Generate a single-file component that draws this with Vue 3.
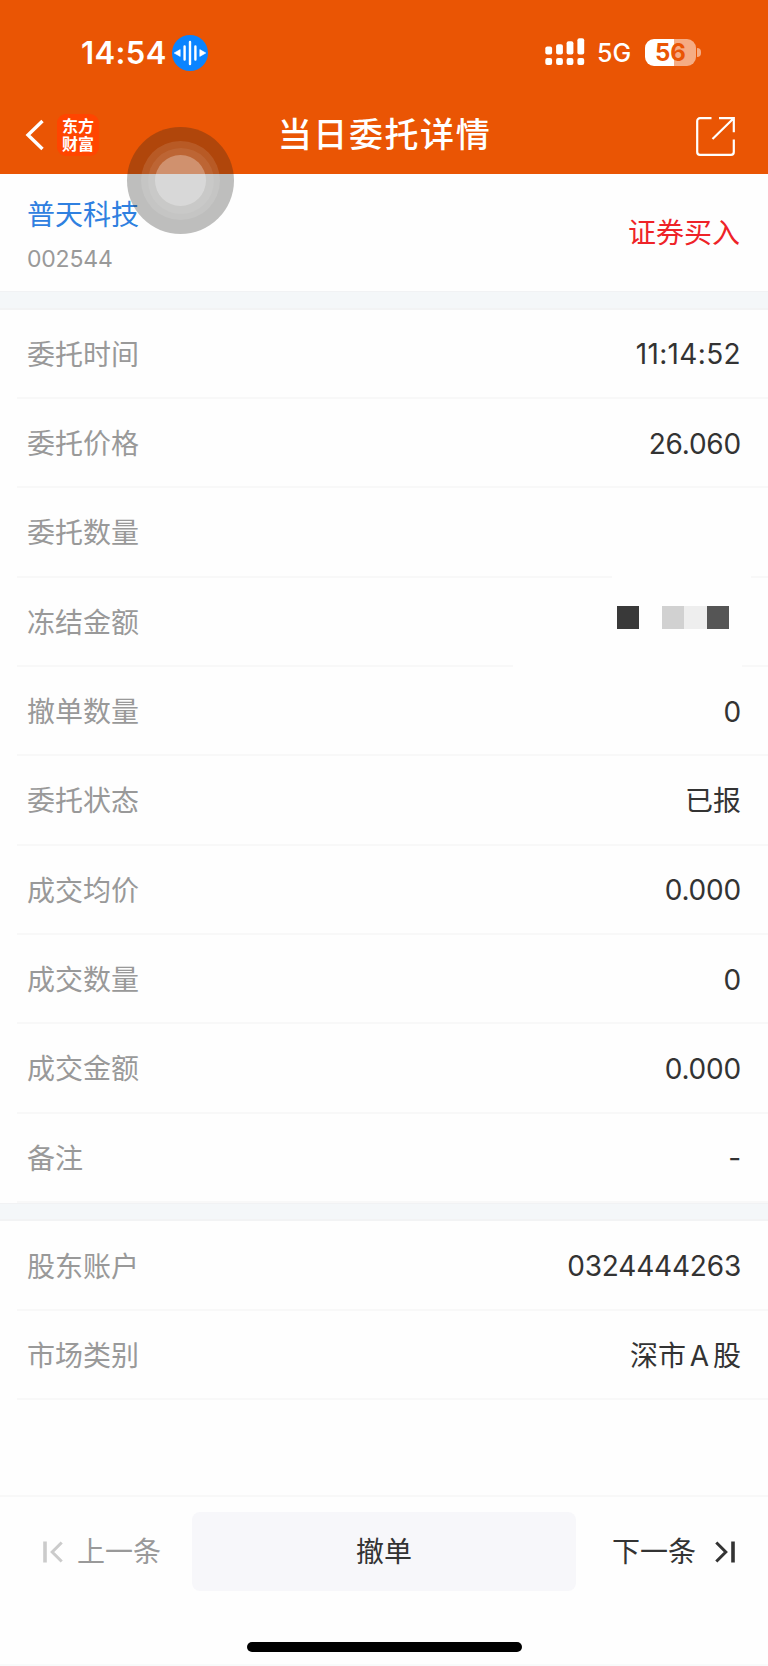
<template>
  <div class="page">
    <header class="header">
      <div class="status">
        <div class="clock">
          <span class="time">14:54</span>
          <svg class="voice" viewBox="0 0 36 36">
            <circle cx="18" cy="18" r="18" fill="#0a84ff" />
            <g stroke="#fff" stroke-width="2.4" stroke-linecap="round">
              <path d="M18 7v22M12.6 11.5v13M23.4 11.5v13" />
            </g>
            <path d="M2.2 18l6-3.4v6.8zM33.8 18l-6-3.4v6.8z" fill="#fff" stroke="#fff" stroke-width=".6" stroke-linejoin="round" />
          </svg>
        </div>
        <div class="network">
          <svg class="signal" viewBox="0 0 40 28" fill="#fff">
            <rect x="0.3" y="8.6" width="6.8" height="8" rx="2" />
            <rect x="11.1" y="6.2" width="6.8" height="10.4" rx="2" />
            <rect x="21.6" y="3.2" width="6.8" height="13.4" rx="2" />
            <rect x="32.4" y="0.2" width="6.8" height="16.4" rx="2" />
            <rect x="0.3" y="20" width="6.8" height="7" rx="2" />
            <rect x="11.1" y="20" width="6.8" height="7" rx="2" />
            <rect x="21.6" y="20" width="6.8" height="7" rx="2" />
            <rect x="32.4" y="20" width="6.8" height="7" rx="2" />
          </svg>
          <span class="five">5G</span>
          <div class="battery">
            <span>56</span>
          </div>
          <i class="tip"></i>
        </div>
      </div>
      <div class="nav">
        <div class="nav-left">
          <svg class="back" viewBox="0 0 20 32">
            <path d="M17.5 2L3 16l14.5 14" fill="none" stroke="#fff" stroke-width="3.4" />
          </svg>
          <div class="logo">
            <span>东方</span>
            <span>财富</span>
          </div>
        </div>
        <h1 class="title">当日委托详情</h1>
        <svg class="share" viewBox="0 0 39 39">
          <path
            d="M15.5 1.2H4a2.8 2.8 0 0 0-2.8 2.8v31a2.8 2.8 0 0 0 2.8 2.8h31a2.8 2.8 0 0 0 2.8-2.8V22.5M23 1.2h14.8v14M37.2 1.8L16.500 22"
            fill="none"
            stroke="#fff"
            stroke-width="2.2"
          />
        </svg>
      </div>
    </header>

    <section class="stock">
      <div>
        <div class="name">普天科技</div>
        <div class="code">002544</div>
      </div>
      <div class="side">证券买入</div>
    </section>

    <div class="gap"></div>
    <section>
      <div v-for="row in orderRows" :key="row.label" class="row" :class="row.cls">
        <span class="label">{{ row.label }}</span>
        <div v-if="row.mosaic" class="mosaic">
          <i v-for="n in 5" :key="n" :class="'m' + n"></i>
        </div>
        <span v-else class="value">{{ row.value }}</span>
      </div>
    </section>

    <div class="gap"></div>
    <section>
      <div v-for="row in accountRows" :key="row.label" class="row" :class="row.cls">
        <span class="label">{{ row.label }}</span>
        <span class="value">{{ row.value }}</span>
      </div>
    </section>

    <footer class="footer">
      <div class="prev">
        <svg viewBox="0 0 20 22" fill="none" stroke="#cbcbcb">
          <path d="M2 0.5v21" stroke-width="3.6" />
          <path d="M18.7 1.5L9.2 11l9.5 9.5" stroke-width="3" />
        </svg>
        <span>上一条</span>
      </div>
      <button class="cancel">撤单</button>
      <div class="next">
        <span>下一条</span>
        <svg viewBox="0 0 20 22" fill="none" stroke="#333">
          <path d="M18 0.5v21" stroke-width="3.6" />
          <path d="M1.3 1.5L10.8 11l-9.5 9.5" stroke-width="3" />
        </svg>
      </div>
    </footer>
    <div class="home"></div>

    <!-- 悬浮辅助按钮 -->
    <div class="assist">
      <div class="ring">
        <div class="ring2">
          <div class="core"></div>
        </div>
      </div>
    </div>
  </div>
</template>

<script setup>
import { ref } from 'vue';

const orderRows = ref([
  { label: '委托时间', value: '11:14:52', cls: 'clock-row' },
  { label: '委托价格', value: '26.060' },
  { label: '委托数量', value: '', cls: 'hide-a' },
  { label: '冻结金额', mosaic: true, cls: 'hide-b' }, // 金额打码
  { label: '撤单数量', value: '0' },
  { label: '委托状态', value: '已报', cls: 'cn' },
  { label: '成交均价', value: '0.000' },
  { label: '成交数量', value: '0' },
  { label: '成交金额', value: '0.000' },
  { label: '备注', value: '-' }
]);

const accountRows = ref([
  { label: '股东账户', value: '0324444263' },
  { label: '市场类别', value: '深市 A 股', cls: 'cn' }
]);
</script>

<style>
body {
  margin: 0;
  background: #fefefe;
}
</style>

<style scoped>
.page {
  position: relative;
  display: flex;
  flex-direction: column;
  width: 768px;
  height: 1666px;
  box-sizing: border-box;
  overflow: hidden;
  background: #fefefe;
  border-bottom: 2px solid #f8fafa;
  font-family: Inter, "Noto Sans CJK SC", sans-serif;
  color: #333;
}

.header {
  height: 174px;
  flex-shrink: 0;
  background: #ea5504;
  color: #fff;
}

.status {
  display: flex;
  justify-content: space-between;
  align-items: center;
  height: 104px;
  padding: 0 67px 0 81px;
}

.clock,
.network {
  display: flex;
  align-items: center;
}

.time {
  width: 91px;
  font-size: 31px;
  font-weight: 600;
  letter-spacing: 0.4px;
  white-space: nowrap;
}

.voice {
  width: 36px;
  height: 36px;
  margin-top: 2px;
}

.signal {
  width: 40px;
  height: 28px;
}

.five {
  width: 48px;
  margin-left: 12px;
  font-size: 25px;
  font-weight: 500;
  margin-top: 2px;
}

.battery {
  width: 51px;
  height: 27px;
  border-radius: 9px;
  background: linear-gradient(to right, #fff 29px, #f5ac84 29px);
  color: #ea5504;
  font-size: 24px;
  font-weight: 700;
  line-height: 27px;
  text-align: center;
}

.tip {
  width: 4px;
  height: 9px;
  margin-left: 1px;
  border-radius: 0 4px 4px 0;
  background: #f5ac84;
}

.nav {
  display: grid;
  grid-template-columns: 1fr auto 1fr;
  align-items: center;
  height: 62px;
  padding: 0 33px 0 25px;
}

.nav-left {
  display: flex;
  align-items: center;
  gap: 12px;
}

.back {
  width: 20px;
  height: 32px;
}

.logo {
  display: flex;
  flex-direction: column;
  justify-content: center;
  width: 42px;
  height: 42px;
  border-radius: 9px;
  background: #ff4500;
  font-size: 16px;
  font-weight: 700;
  line-height: 18px;
  text-align: center;
}

.title {
  margin: 0 -9px 0 0;
  font-size: 34px;
  font-weight: 500;
  letter-spacing: 1.6px;
  line-height: 50px;
}

.share {
  justify-self: end;
  width: 39px;
  height: 39px;
  margin-top: 2px;
}

.stock {
  display: flex;
  justify-content: space-between;
  align-items: center;
  height: 117px;
  box-sizing: border-box;
  padding: 4px 27px 0;
}

.name {
  color: #2f80e0;
  font-size: 28px;
  line-height: 40px;
}

.code {
  margin-top: 9px;
  color: #999;
  font-size: 23px;
  letter-spacing: -0.2px;
  line-height: 30px;
}

.side {
  padding: 0 1px 7px 0;
  color: #ee2328;
  font-size: 28px;
}

.gap {
  height: 18.5px;
  box-sizing: border-box;
  background: #f4f7f9;
  border-top: 1px solid #f1f2f4;
  border-bottom: 2px solid #f2f3f4;
}

.row {
  position: relative;
  display: flex;
  justify-content: space-between;
  align-items: center;
  height: 89.35px;
  box-sizing: border-box;
  margin-left: 17px;
  padding: 2px 27px 0 10px;
  border-bottom: 2px solid #f8f8f8;
  font-size: 28px;
}

.label {
  padding-bottom: 3px;
  color: #999;
}

.value {
  letter-spacing: -0.2px;
}

.clock-row .value {
  letter-spacing: 0.35px;
}

.cn .value {
  padding-bottom: 3px;
  letter-spacing: 0;
  word-spacing: -4px;
}

/* 打码区域盖住的分割线 */
.hide-a::after,
.hide-b::after {
  content: "";
  position: absolute;
  bottom: -2px;
  height: 2px;
  background: #fefefe;
}

.hide-a::after {
  right: 17px;
  width: 139px;
}

.hide-b::after {
  right: 26px;
  width: 229px;
}

.mosaic {
  display: flex;
  margin: 0 12px 10px 0;
}

.mosaic i {
  width: 22.5px;
  height: 23px;
}

.m1 {
  background: #393939;
}

.m3 {
  background: #d1d1d1;
}

.m4 {
  background: #eeeeee;
}

.m5 {
  background: #555;
}

.footer {
  display: flex;
  align-items: center;
  height: 111px;
  box-sizing: border-box;
  margin-top: 95px;
  border-top: 2px solid #f8f8f8;
  font-size: 28px;
}

.prev,
.next {
  display: flex;
  align-items: center;
  width: 192px;
  box-sizing: border-box;
}

.prev {
  padding-left: 43px;
  gap: 14px;
  color: #999;
}

.next {
  padding-left: 36px;
  gap: 19px;
}

.prev span,
.next span {
  padding-bottom: 3px;
}

.footer svg {
  width: 20px;
  height: 22px;
}

.cancel {
  width: 384px;
  height: 79px;
  padding: 0 0 3px;
  border: none;
  border-radius: 8px;
  background: #f7f7fa;
  color: #333;
  font: inherit;
}

.home {
  width: 275px;
  height: 10px;
  margin: 36px auto 0;
  border-radius: 5px;
  background: #000;
}

.assist {
  position: absolute;
  left: 127px;
  top: 127px;
  width: 107px;
  height: 107px;
  border-radius: 50%;
  background: rgba(36, 34, 32, 0.29);
}

.assist,
.ring,
.ring2 {
  display: flex;
  align-items: center;
  justify-content: center;
}

.ring {
  width: 79px;
  height: 79px;
  border-radius: 50%;
  background: rgba(255, 255, 255, 0.11);
}

.ring2 {
  width: 66px;
  height: 66px;
  border-radius: 50%;
  background: rgba(255, 255, 255, 0.07);
}

.core {
  width: 51px;
  height: 51px;
  border-radius: 50%;
  background: rgba(255, 255, 255, 0.29);
}
</style>
